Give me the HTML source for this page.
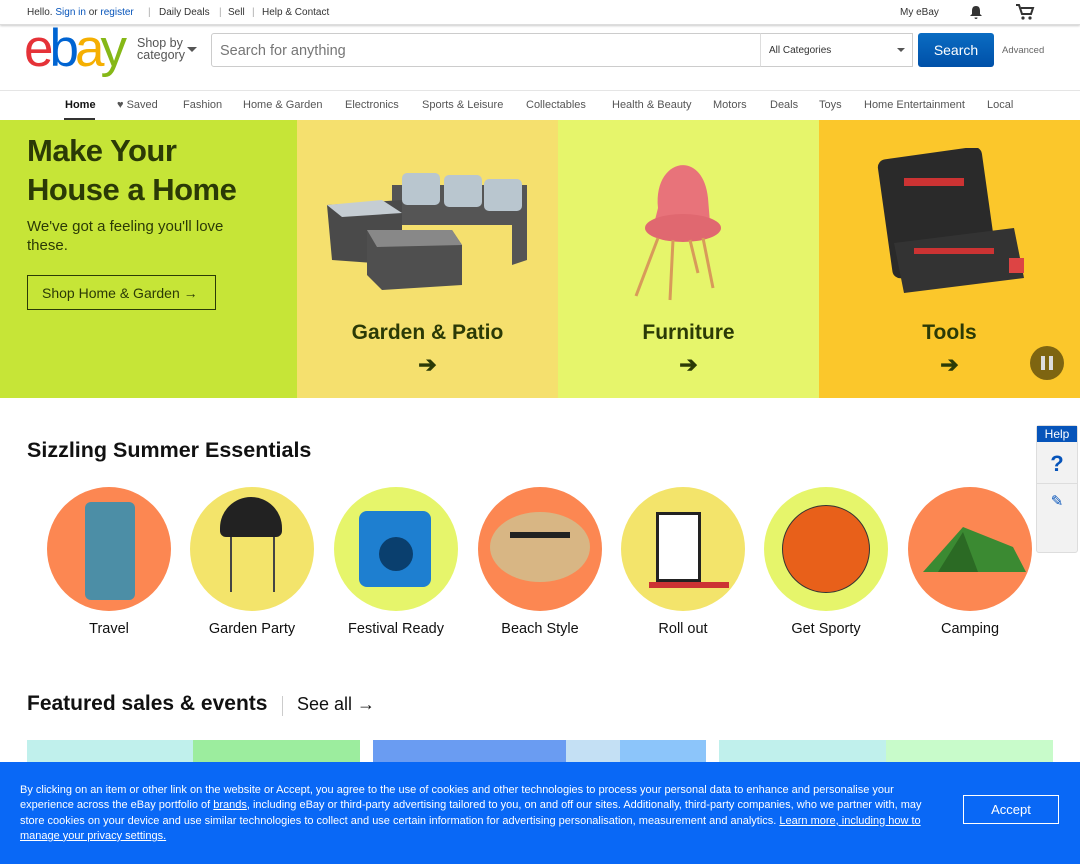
<!DOCTYPE html>
<html><head><meta charset="utf-8"><style>
*{box-sizing:border-box;margin:0;padding:0}
body{width:1080px;height:864px;overflow:hidden;background:#fff;font-family:"Liberation Sans",Arial,sans-serif;color:#333;position:relative}
.abs{position:absolute}
.top{position:absolute;top:0;left:0;width:1080px;height:25px;border-bottom:1px solid #ddd;box-shadow:0 1px 2px #ccc;font-size:10px;color:#333}
.top span{position:absolute;top:7px}
a{color:#0654ba;text-decoration:none}
.nav{position:absolute;top:90px;left:0;width:1080px;height:30px;border-top:1px solid #e5e5e5;font-size:11px;color:#555}
.nav span{position:absolute;top:8px}
.hero{position:absolute;top:120px;height:278px}
.dg{color:#2b3a06}
.cap{position:absolute;width:100%;text-align:center;top:201px;font-size:21px;font-weight:bold;color:#2b3a06}
.arr{position:absolute;width:100%;text-align:center;top:232px;font-size:22px;font-weight:bold;color:#2b3a06}
.circ{position:absolute;top:487px;width:124px;height:124px;border-radius:50%}
.lbl{position:absolute;top:621px;width:160px;text-align:center;font-size:14.5px;color:#111}
.card{position:absolute;top:740px;height:30px}
</style></head><body>
<div class="top">
<span style="left:27px">Hello. <a>Sign in</a> or <a>register</a></span>
<span style="left:148px;color:#aaa">|</span>
<span style="left:159px">Daily Deals</span>
<span style="left:219px;color:#aaa">|</span>
<span style="left:228px">Sell</span>
<span style="left:252px;color:#aaa">|</span>
<span style="left:262px">Help &amp; Contact</span>
<span style="left:900px">My eBay</span>
<svg class="abs" style="left:968px;top:4px" width="16" height="16" viewBox="0 0 16 16"><path d="M8 2c-3 0-4 2-4 5v3l-2 2h12l-2-2V7c0-3-1-5-4-5zM6.5 13.5a1.5 1.5 0 003 0z" fill="#333"/></svg>
<svg class="abs" style="left:1015px;top:3px" width="20" height="18" viewBox="0 0 20 18"><path d="M1 2h3l3 9h9l2-6H6" fill="none" stroke="#333" stroke-width="2"/><circle cx="8" cy="15" r="1.6" fill="#333"/><circle cx="15" cy="15" r="1.6" fill="#333"/></svg>
</div>
<div class="abs" style="left:24px;top:18px;font-size:53px;letter-spacing:-4px;font-family:'Liberation Sans',sans-serif"><span style="color:#e53238">e</span><span style="color:#0064d2">b</span><span style="color:#f5af02">a</span><span style="color:#86b817">y</span></div>
<div class="abs" style="left:137px;top:37px;font-size:12.5px;line-height:12px;color:#555">Shop by<br>category</div>
<div class="abs" style="left:187px;top:47px;border:5px solid transparent;border-top-color:#555"></div>
<div class="abs" style="left:211px;top:33px;width:550px;height:34px;border:1px solid #ccc;border-radius:3px 0 0 3px;font-size:14.5px;color:#767676;padding:9px 8px">Search for anything</div>
<div class="abs" style="left:760px;top:33px;width:153px;height:34px;border:1px solid #ccc;border-left:1px solid #ddd;font-size:10px;color:#333;padding:11px 8px">All Categories</div>
<div class="abs" style="left:897px;top:48px;border:4px solid transparent;border-top-color:#555"></div>
<div class="abs" style="left:918px;top:33px;width:76px;height:34px;background:linear-gradient(#0a6cc2,#0050a8);border-radius:3px;color:#fff;font-size:14px;text-align:center;line-height:34px">Search</div>
<div class="abs" style="left:1002px;top:45px;font-size:9.5px;color:#666">Advanced</div>
<div class="nav">
<span style="left:65px;color:#111;font-weight:bold">Home</span>
<div class="abs" style="left:64px;top:27px;width:31px;height:2px;background:#333"></div>
<span style="left:117px">♥ Saved</span>
<span style="left:183px">Fashion</span>
<span style="left:243px">Home &amp; Garden</span>
<span style="left:345px">Electronics</span>
<span style="left:422px">Sports &amp; Leisure</span>
<span style="left:526px">Collectables</span>
<span style="left:612px">Health &amp; Beauty</span>
<span style="left:713px">Motors</span>
<span style="left:770px">Deals</span>
<span style="left:819px">Toys</span>
<span style="left:864px">Home Entertainment</span>
<span style="left:987px">Local</span>
</div>
<div class="hero" style="left:0;width:297px;background:#c6e537">
<div class="abs dg" style="left:27px;top:11px;font-size:31px;font-weight:bold;line-height:39px;letter-spacing:-0.5px">Make Your<br>House a Home</div>
<div class="abs dg" style="left:27px;top:97px;font-size:15px;line-height:19px">We've got a feeling you'll love<br>these.</div>
<div class="abs dg" style="left:27px;top:155px;width:189px;height:35px;border:1px solid #2b3a06;font-size:14px;padding:9px 14px">Shop Home &amp; Garden →</div>
</div>
<div class="hero" style="left:297px;width:261px;background:#f5e06e">
<svg class="abs" style="left:25px;top:45px" width="210" height="125"><polygon points="70,20 205,20 205,95 190,100 190,60 70,60" fill="#555"/><rect x="80" y="8" width="38" height="32" rx="5" fill="#b9c6cf"/><rect x="122" y="10" width="38" height="32" rx="5" fill="#b9c6cf"/><rect x="162" y="14" width="38" height="32" rx="5" fill="#b9c6cf"/><polygon points="5,40 80,35 80,100 10,95" fill="#4a4a4a"/><polygon points="5,40 60,35 80,48 20,52" fill="#c5cdd3"/><polygon points="45,65 130,65 140,80 140,120 60,125 45,110" fill="#4f4f4f"/><polygon points="45,65 130,65 140,80 55,82" fill="#888"/></svg>
<div class="cap">Garden &amp; Patio</div><div class="arr">➔</div>
</div>
<div class="hero" style="left:558px;width:261px;background:#e6f56b">
<svg class="abs" style="left:70px;top:28px" width="120" height="155"><path d="M30 60 C25 10 75 0 80 50 L82 75 L25 80Z" fill="#e8737a"/><ellipse cx="55" cy="80" rx="38" ry="14" fill="#e06870"/><path d="M30 90 L8 148 M45 92 L42 152 M75 90 L85 140 M62 92 L70 125" stroke="#d89a5a" stroke-width="3"/></svg>
<div class="cap">Furniture</div><div class="arr">➔</div>
</div>
<div class="hero" style="left:819px;width:261px;background:#fbc72b">
<svg class="abs" style="left:55px;top:28px" width="160" height="150"><rect x="10" y="5" width="105" height="120" rx="8" fill="#2a2a2a" transform="rotate(-8 60 60)"/><polygon points="20,95 140,80 150,130 30,145" fill="#333"/><rect x="30" y="30" width="60" height="8" fill="#c33"/><rect x="40" y="100" width="80" height="6" fill="#c33"/><rect x="135" y="110" width="15" height="15" fill="#d44"/></svg>
<div class="cap">Tools</div><div class="arr">➔</div>
<div class="abs" style="left:211px;top:226px;width:34px;height:34px;border-radius:50%;background:#7e6511"><div class="abs" style="left:11px;top:10px;width:4px;height:14px;background:#ddd"></div><div class="abs" style="left:19px;top:10px;width:4px;height:14px;background:#ddd"></div></div>
</div>
<div class="abs" style="left:27px;top:438px;font-size:21.5px;font-weight:bold;color:#111">Sizzling Summer Essentials</div>
<div class="circ" style="left:47px;background:#fc8752"><div class="abs" style="left:38px;top:15px;width:50px;height:98px;border-radius:6px;background:#4c8ea6"></div></div>
<div class="circ" style="left:190px;background:#f3e46b"><div class="abs" style="left:30px;top:10px;width:62px;height:40px;border-radius:31px 31px 6px 6px;background:#222"></div><div class="abs" style="left:40px;top:50px;width:45px;height:55px;border-left:2px solid #444;border-right:2px solid #444"></div></div>
<div class="circ" style="left:334px;background:#e6f56b"><div class="abs" style="left:25px;top:24px;width:72px;height:76px;border-radius:8px;background:#1e7fd0"></div><div class="abs" style="left:45px;top:50px;width:34px;height:34px;border-radius:50%;background:#0a3f6e"></div></div>
<div class="circ" style="left:478px;background:#fc8752"><div class="abs" style="left:12px;top:25px;width:100px;height:70px;border-radius:50%;background:#d8b684"></div><div class="abs" style="left:32px;top:45px;width:60px;height:6px;background:#222"></div></div>
<div class="circ" style="left:621px;background:#f3e46b"><div class="abs" style="left:35px;top:25px;width:45px;height:70px;background:#fff;border:3px solid #222"></div><div class="abs" style="left:28px;top:95px;width:80px;height:6px;background:#c33"></div></div>
<div class="circ" style="left:764px;background:#e6f56b"><div class="abs" style="left:18px;top:18px;width:88px;height:88px;border-radius:50%;background:#e8601a;border:1px solid #333"></div></div>
<div class="circ" style="left:908px;background:#fc8752"><svg class="abs" style="left:10px;top:30px" width="110" height="60"><polygon points="5,55 45,10 95,30 108,55" fill="#3b8a32"/><polygon points="20,55 45,15 60,55" fill="#2b6a24"/></svg></div>
<div class="lbl" style="left:29px">Travel</div>
<div class="lbl" style="left:172px">Garden Party</div>
<div class="lbl" style="left:316px">Festival Ready</div>
<div class="lbl" style="left:460px">Beach Style</div>
<div class="lbl" style="left:603px">Roll out</div>
<div class="lbl" style="left:746px">Get Sporty</div>
<div class="lbl" style="left:890px">Camping</div>
<div class="abs" style="left:27px;top:692px;font-size:21px;font-weight:bold;color:#111">Featured sales &amp; events</div>
<div class="abs" style="left:282px;top:696px;width:1px;height:20px;background:#ccc"></div>
<div class="abs" style="left:297px;top:694px;font-size:18px;color:#111">See all →</div>
<div class="card" style="left:27px;width:166px;background:#c0f0ec"></div>
<div class="card" style="left:193px;width:167px;background:#9ced9e"></div>
<div class="card" style="left:373px;width:193px;background:#6a9cf2"></div>
<div class="card" style="left:566px;width:54px;background:#c4e0f4"></div>
<div class="card" style="left:620px;width:86px;background:#8cc5fa"></div>
<div class="card" style="left:719px;width:167px;background:#c0f0ec"></div>
<div class="card" style="left:886px;width:167px;background:#c8fbca"></div>
<div class="abs" style="left:1036px;top:425px;width:42px;height:128px;background:#f2f2f2;border:1px solid #ddd;border-radius:3px">
<div style="background:#0654ba;color:#fff;font-size:12px;text-align:center;height:16px;line-height:16px">Help</div>
<div style="text-align:center;font-size:22px;font-weight:bold;color:#0654ba;height:40px;line-height:40px;border-bottom:1px solid #ddd;margin-top:2px">?</div>
<div style="text-align:center;font-size:15px;color:#0654ba;line-height:36px">✎</div>
</div>
<div class="abs" style="left:0;top:762px;width:1080px;height:102px;background:#0968f6;color:#fff">
<div class="abs" style="left:20px;top:21px;width:920px;font-size:11px;line-height:15.3px">By clicking on an item or other link on the website or Accept, you agree to the use of cookies and other technologies to process your personal data to enhance and personalise your experience across the eBay portfolio of <u>brands</u>, including eBay or third-party advertising tailored to you, on and off our sites. Additionally, third-party companies, who we partner with, may store cookies on your device and use similar technologies to collect and use certain information for advertising personalisation, measurement and analytics. <u>Learn more, including how to manage your privacy settings.</u></div>
<div class="abs" style="left:963px;top:33px;width:96px;height:29px;border:1px solid #fff;font-size:13px;text-align:center;line-height:27px">Accept</div>
</div>
</body></html>
